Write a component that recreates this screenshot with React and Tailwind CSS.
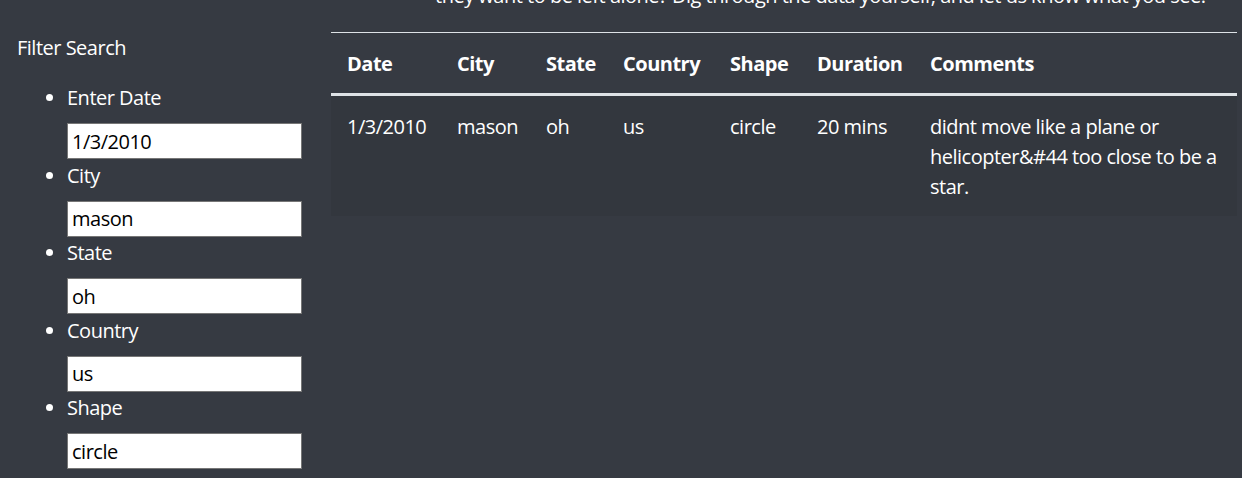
import React from "react";

const filters = [
  { label: "Enter Date", value: "1/3/2010" },
  { label: "City", value: "mason" },
  { label: "State", value: "oh" },
  { label: "Country", value: "us" },
  { label: "Shape", value: "circle" },
];

const columns = [
  { name: "Date", w: "w-[110px]" },
  { name: "City", w: "w-[89px]" },
  { name: "State", w: "w-[77px]" },
  { name: "Country", w: "w-[107px]" },
  { name: "Shape", w: "w-[87px]" },
  { name: "Duration", w: "w-[113px]" },
  { name: "Comments", w: "" },
];

const row = ["1/3/2010", "mason", "oh", "us", "circle", "20 mins"];

const App = () => {
  return (
    <div
      className="h-[478px] w-[1242px] overflow-hidden bg-[#363a42] text-[20px] leading-[30px] tracking-[-0.5px] text-white"
      style={{ fontFamily: '"Open Sans", "Noto Sans", sans-serif' }}
    >
      <div className="flex">
        {/* Sidebar */}
        <aside className="w-[331px] shrink-0 pl-[17px] pt-[33px]">
          <p>Filter Search</p>
          <ul className="mt-[20px] list-disc pl-[50px]">
            {filters.map((f) => (
              <li key={f.label} className="pb-[1.5px]">
                <label className="mb-[10px] block">{f.label}</label>
                <input
                  className="block h-[36px] w-[235px] border border-[#767676] bg-white px-[4px] text-[20px] tracking-[-0.5px] text-black outline-none"
                  defaultValue={f.value}
                />
              </li>
            ))}
          </ul>
        </aside>

        {/* Main */}
        <main className="flex-1 pr-[5px]">
          <p className="-mt-[19px] ml-[104px] whitespace-nowrap">
            they want to be left alone? Dig through the data yourself, and let us know what you see.
          </p>
          <table className="mt-[21px] w-[906px] table-fixed border-collapse text-left">
            <thead>
              <tr className="border-t border-b-[3px] border-t-[#dee2e6] border-b-[#dee2e6]">
                {columns.map((c) => (
                  <th key={c.name} className={`${c.w} px-[16px] pt-[16px] pb-[14px] font-bold`}>
                    {c.name}
                  </th>
                ))}
              </tr>
            </thead>
            <tbody>
              <tr className="bg-[#33373e] align-top">
                {row.map((v, i) => (
                  <td key={i} className="px-[16px] pt-[16px] pb-[14px]">
                    {v}
                  </td>
                ))}
                <td className="px-[16px] pt-[16px] pb-[14px] whitespace-nowrap">
                  didnt move like a plane or
                  <br />
                  helicopter&amp;#44 too close to be a
                  <br />
                  star.
                </td>
              </tr>
            </tbody>
          </table>
        </main>
      </div>
    </div>
  );
};

export default App;
